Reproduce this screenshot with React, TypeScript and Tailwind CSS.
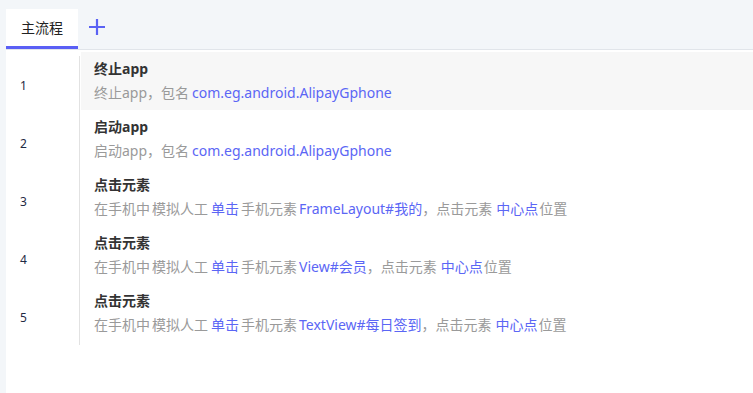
import React from "react";

const font = { fontFamily: '"Noto Sans", "Noto Sans CJK SC", sans-serif' };

type Seg = { t: string; b?: boolean; m?: number };

const clickDesc = (el: string): Seg[] => [
  { t: "在手机中" },
  { t: "模拟人工", m: 2 },
  { t: "单击", b: true, m: 3 },
  { t: "手机元素", m: 2 },
  { t: el, b: true, m: 2 },
  { t: "，点击元素", m: 0 },
  { t: "中心点", b: true, m: 4 },
  { t: "位置", m: 1 },
];

const rows: { title: string; desc: Seg[] }[] = [
  { title: "终止app", desc: [{ t: "终止app，包名" }, { t: "com.eg.android.AlipayGphone", b: true, m: 3 }] },
  { title: "启动app", desc: [{ t: "启动app，包名" }, { t: "com.eg.android.AlipayGphone", b: true, m: 3 }] },
  { title: "点击元素", desc: clickDesc("FrameLayout#我的") },
  { title: "点击元素", desc: clickDesc("View#会员") },
  { title: "点击元素", desc: clickDesc("TextView#每日签到") },
];

const ml: Record<number, string> = {
  0: "",
  1: "ml-[1px]",
  2: "ml-[2px]",
  3: "ml-[3px]",
  4: "ml-[4px]",
};

export default function App() {
  return (
    <div className="w-[753px] h-[393px] bg-[#f3f6f9] pl-[6px] flex flex-col overflow-hidden" style={font}>
      <div className="h-[50px] flex items-end border-b border-[#e1e5ea] shrink-0">
        <div className="w-[72px] h-[40px] bg-white flex flex-col">
          <div className="flex-1 flex items-center justify-center text-[14px] text-[#222]">主流程</div>
          <div className="h-[3px] bg-[#5a5ff5]" />
        </div>
        <div className="self-start mt-[18px] ml-[10px] w-[18px] h-[18px]">
          <svg width="18" height="18" viewBox="0 0 18 18">
            <path d="M9 1 V17 M1 9 H17" stroke="#5a62f4" strokeWidth="2.2" />
          </svg>
        </div>
      </div>
      <div className="flex-1 bg-white flex pt-[2px]">
        <div className="w-[73px] flex flex-col pt-[5px]">
          {rows.map((_, i) => (
            <div key={i} className="h-[58px] flex items-center pl-[14px] text-[12px] text-[#1f2a44]">
              {i + 1}
            </div>
          ))}
        </div>
        <div className="w-px h-[289px] mt-[4px] bg-[#e2e2e2]" />
        <div className="flex-1 flex flex-col ml-px">
          {rows.map((r, i) => (
            <div
              key={i}
              className={`h-[58px] flex flex-col justify-center gap-[6px] pl-[13px] ${i === 0 ? "bg-[#f7f7f7]" : ""}`}
            >
              <div className="text-[14px] leading-[18px] font-bold text-[#333]">{r.title}</div>
              <div className="text-[14px] leading-[18px] text-[#9a9a9a] whitespace-pre">
                {r.desc.map((s, j) => (
                  <span
                    key={j}
                    className={`inline-block ${ml[s.m ?? 0]} ${s.b ? "text-[#5b66f5]" : ""}`}
                  >
                    {s.t}
                  </span>
                ))}
              </div>
            </div>
          ))}
        </div>
      </div>
    </div>
  );
}
